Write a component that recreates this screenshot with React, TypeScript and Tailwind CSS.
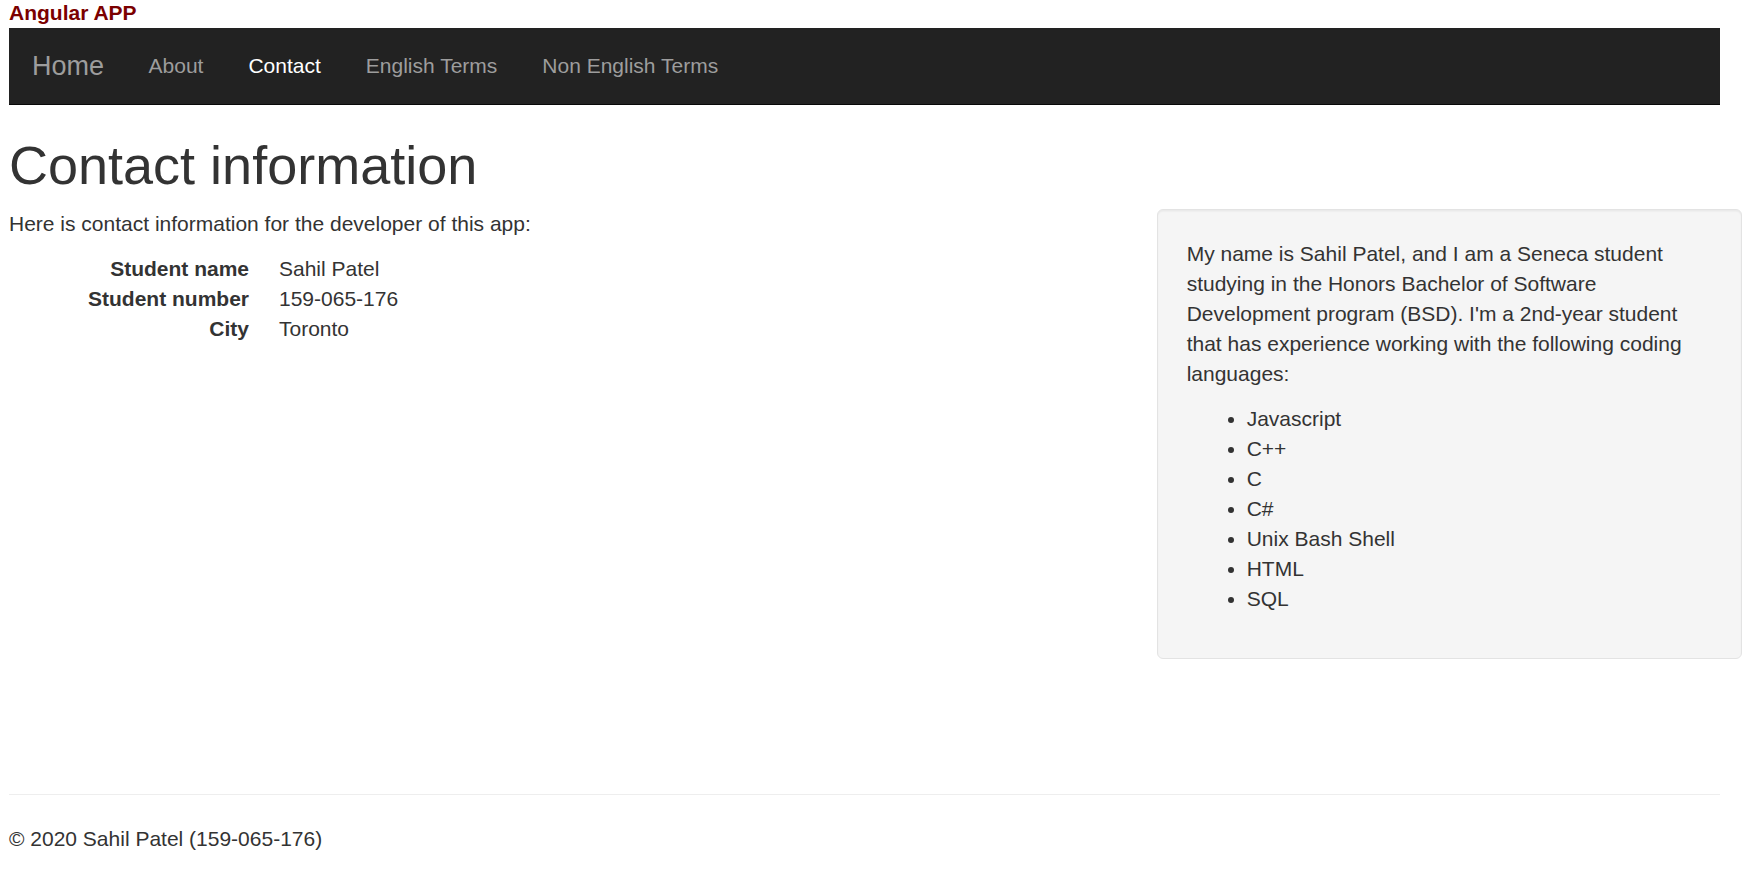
import React from "react";

const languages = ["Javascript", "C++", "C", "C#", "Unix Bash Shell", "HTML", "SQL"];

const navLinks = [
  { label: "About", active: false },
  { label: "Contact", active: true },
  { label: "English Terms", active: false },
  { label: "Non English Terms", active: false },
];

const details = [
  { label: "Student name", value: "Sahil Patel" },
  { label: "Student number", value: "159-065-176" },
  { label: "City", value: "Toronto" },
];

export default function App(): React.JSX.Element {
  return (
    <div className="min-h-[878px] bg-white text-[#333] text-[21px] leading-[30px] font-['Liberation_Sans',Arial,sans-serif]">
      <div className="ml-[9px] w-[1711px]">
        <div className="text-[21px] leading-[26px] mb-[2px] font-bold text-[#7b0000]">Angular APP</div>

        <nav className="flex items-center h-[77px] bg-[#222] border-b-[1.5px] border-[#080808]">
          <a href="#" className="pl-[23px] pr-[22px] text-[27px] text-[#9d9d9d]">Home</a>
          <ul className="flex items-center">
            {navLinks.map((link) => (
              <li key={link.label}>
                <a href="#" className={`px-[22.5px] ${link.active ? "text-white" : "text-[#9d9d9d]"}`}>
                  {link.label}
                </a>
              </li>
            ))}
          </ul>
        </nav>

        <h1 className="mt-[31px] mb-[14px] text-[54px] leading-[59px] font-normal">Contact information</h1>

        <div className="flex -mx-[22.5px]">
          <div className="w-2/3 px-[22.5px]">
            <p className="mb-[15px]">Here is contact information for the developer of this app:</p>
            <dl>
              {details.map((row) => (
                <div key={row.label} className="flex">
                  <dt className="w-[240px] text-right font-bold">{row.label}</dt>
                  <dd className="ml-[30px]">{row.value}</dd>
                </div>
              ))}
            </dl>
          </div>

          <div className="w-1/3 px-[28.5px] pt-[28.5px] pb-[29px] bg-[#f5f5f5] border-[1.5px] border-[#e3e3e3] rounded-[6px] shadow-[inset_0_1.5px_1.5px_rgba(0,0,0,0.05)]">
            <p className="mb-[15px]">
              My name is Sahil Patel, and I am a Seneca student studying in the Honors Bachelor of Software
              Development program (BSD). I'm a 2nd-year student that has experience working with the following
              coding languages:
            </p>
            <ul className="list-disc pl-[60px] mb-[15px]">
              {languages.map((lang) => (
                <li key={lang}>{lang}</li>
              ))}
            </ul>
          </div>
        </div>

        <hr className="mt-[135px] border-t-[1.5px] border-[#eee]" />
        <footer className="mt-[29px]">© 2020 Sahil Patel (159-065-176)</footer>
      </div>
    </div>
  );
}
